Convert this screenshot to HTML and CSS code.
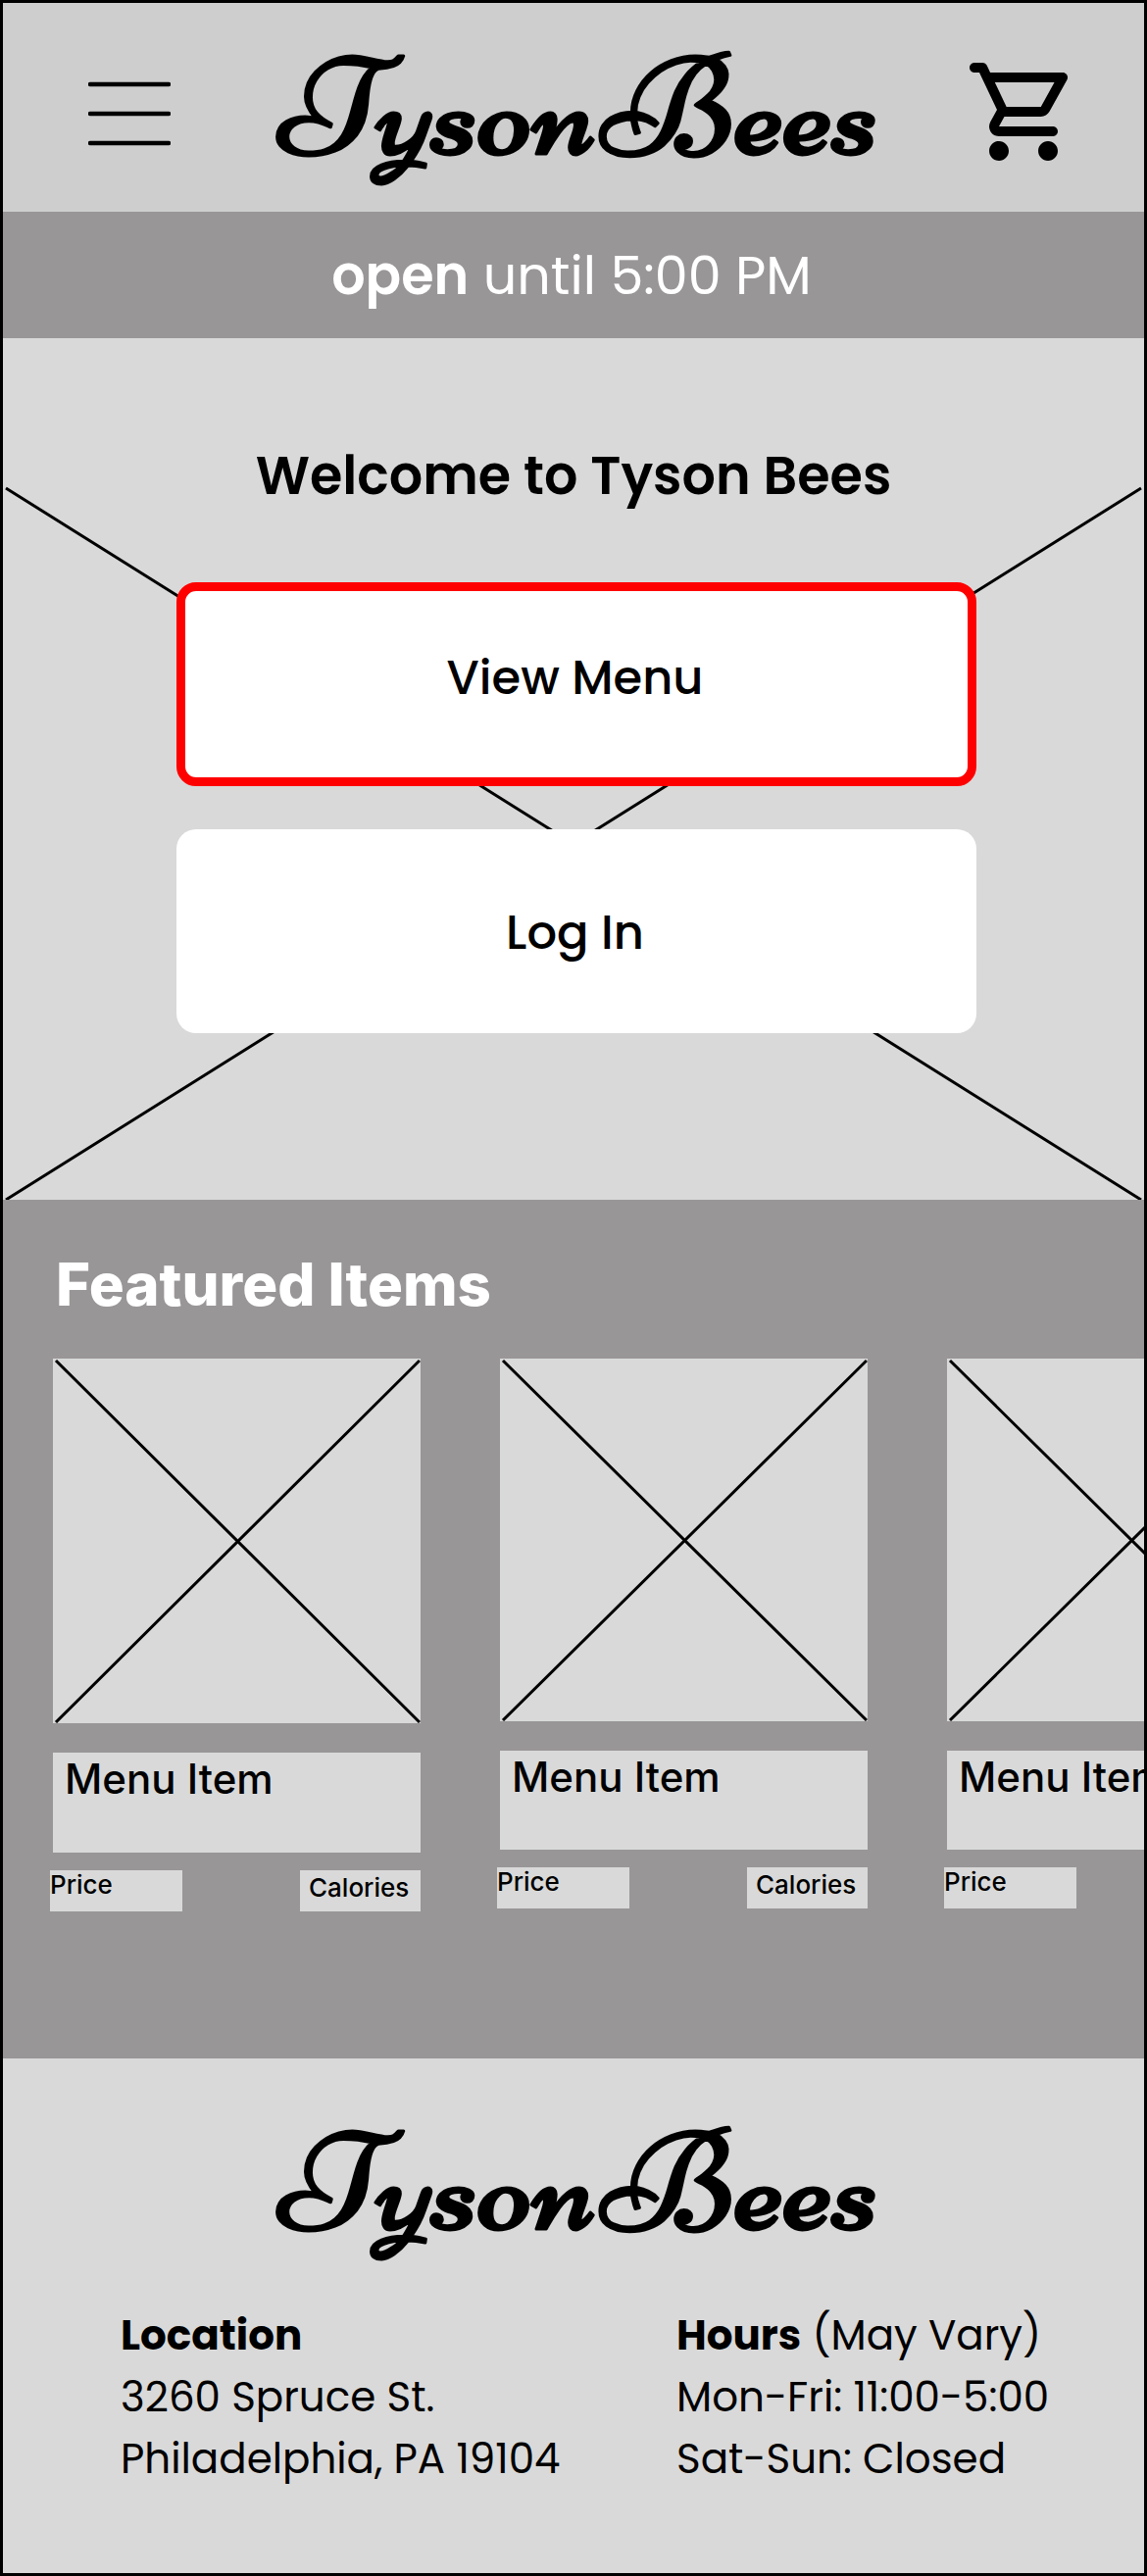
FILE: index.html
```html
<!DOCTYPE html>
<html lang="en">
<head>
<meta charset="utf-8">
<title>Tyson Bees</title>
<link rel="stylesheet" href="styles.css">
</head>
<body>
<div class="page">
  <header class="header">
    <svg class="menu-icon" viewBox="0 0 84 66" role="img" aria-label="Menu"><path d="M2 3H82M2 33H82M2 63H82"/></svg>
    <svg class="logo" viewBox="0 0 612 213"><text class="logo-text" x="3" y="154" textLength="324" lengthAdjust="spacingAndGlyphs">Tyson</text><text class="logo-text" x="332" y="154" textLength="283" lengthAdjust="spacingAndGlyphs">Bees</text></svg>
    <svg class="cart-icon" viewBox="0 0 24 24" role="img" aria-label="Cart"><path d="M15.55 13c.75 0 1.41-.41 1.75-1.03l3.58-6.49c.37-.66-.11-1.48-.87-1.48H5.21l-.67-1.43c-.16-.35-.52-.57-.9-.57H2c-.55 0-1 .45-1 1s.45 1 1 1h1l3.6 7.59-1.35 2.44C4.52 15.37 5.48 17 7 17h11c.55 0 1-.45 1-1s-.45-1-1-1H7l1.1-2h7.45zM6.16 6h12.15l-2.76 5H8.53L6.16 6zM7 18c-1.1 0-1.99.9-1.99 2S5.9 22 7 22s2-.9 2-2-.9-2-2-2zm10 0c-1.1 0-1.99.9-1.99 2s.89 2 1.99 2 2-.9 2-2-.9-2-2-2z"/></svg>
  </header>

  <div class="status"><strong class="status-open">open</strong> until 5:00 PM</div>

  <main>
    <section class="hero">
      <svg class="hero-cross" viewBox="0 0 1164 879"><path d="M3 153L1161 879M1161 153L3 879"/></svg>
      <h1 class="hero-title">Welcome to Tyson Bees</h1>
      <a class="button button-primary">View Menu</a>
      <a class="button button-login">Log In</a>
    </section>

    <section class="featured">
      <h2 class="featured-title">Featured Items</h2>
      <div class="items">
        <article class="item item-first">
          <svg class="photo" viewBox="0 0 375 372" preserveAspectRatio="none"><path d="M3 2L374 371M374 2L3 371"/></svg>
          <h3 class="name">Menu Item</h3>
          <div class="facts"><span class="price">Price</span><span class="calories">Calories</span></div>
        </article>
        <article class="item">
          <svg class="photo" viewBox="0 0 375 372" preserveAspectRatio="none"><path d="M3 2L374 371M374 2L3 371"/></svg>
          <h3 class="name">Menu Item</h3>
          <div class="facts"><span class="price">Price</span><span class="calories">Calories</span></div>
        </article>
        <article class="item">
          <svg class="photo" viewBox="0 0 375 372" preserveAspectRatio="none"><path d="M3 2L374 371M374 2L3 371"/></svg>
          <h3 class="name">Menu Item</h3>
          <div class="facts"><span class="price">Price</span></div>
        </article>
      </div>
    </section>
  </main>

  <footer class="footer">
    <svg class="logo footer-logo" viewBox="0 0 612 213"><text class="logo-text" x="3" y="154" textLength="324" lengthAdjust="spacingAndGlyphs">Tyson</text><text class="logo-text" x="332" y="154" textLength="283" lengthAdjust="spacingAndGlyphs">Bees</text></svg>
    <div class="info">
      <div class="location">
        <strong>Location</strong>
        <span>3260 Spruce St.</span>
        <span>Philadelphia, PA 19104</span>
      </div>
      <div class="hours">
        <span><strong>Hours</strong> (May Vary)</span>
        <span>Mon-Fri: 11:00-5:00</span>
        <span>Sat-Sun: Closed</span>
      </div>
    </div>
  </footer>
</div>
</body>
</html>
```
FILE: styles.css
```css
* { box-sizing: border-box; }
body { margin: 0; color: #000; font-family: Poppins, Inter, sans-serif; }
h1, h2, h3 { margin: 0; }
svg { display: block; flex: none; }
.page { width: 1170px; height: 2628px; border: 3px solid #000; background: #d9d9d9; overflow: hidden; }

.header { display: flex; height: 213px; padding-left: 87px; background: #cecece; }
.menu-icon { width: 84px; height: 66px; margin-top: 80px; }
.menu-icon path { stroke: #000; stroke-width: 4.5; stroke-linecap: round; }
.logo { width: 612px; height: 213px; margin-left: 108px; overflow: visible; }
.logo-text { font: 142px Niconne, Lato, cursive; stroke: #000; stroke-width: 3px; stroke-linejoin: round; }
.cart-icon { width: 120px; height: 120px; margin: 51px 0 0 90px; }

.status { height: 129px; padding: 1px 4px 0 0; background: #999697; color: #fff; font-size: 54px; line-height: 128px; text-align: center; }
.status-open { font-weight: 600; }

.hero { position: relative; height: 879px; padding-top: 110px; }
.hero-cross { position: absolute; inset: 0; width: 1164px; height: 879px; }
.hero-cross path, .photo path { stroke: #000; stroke-width: 3; }
.hero-title { position: relative; font-size: 54px; font-weight: 600; line-height: 60px; text-align: center; }
.button { position: relative; display: flex; align-items: center; justify-content: center; width: 816px; height: 208px; margin: 44px 0 0 177px; padding: 4px 3px 0 0; border-radius: 20px; background: #fff; font-size: 48px; font-weight: 500; }
.button-primary { margin-top: 79px; padding: 0 3px 12px 0; border: 9px solid #f00; }

.featured { height: 876px; padding: 56px 0 0 48px; background: #999697; font-family: Inter, sans-serif; overflow: hidden; }
.featured-title { margin: 0 0 46px 6px; color: #fff; font-size: 60px; font-weight: 800; line-height: 60px; }
.items { display: flex; gap: 78px; }
.item { flex: none; width: 378px; }
.photo { width: 375px; height: 370px; margin-left: 3px; background: #d9d9d9; }
.item-first .photo { height: 372px; }
.name { height: 101px; margin: 30px 0 18px 3px; padding-left: 12px; background: #d9d9d9; font-size: 42px; font-weight: 500; line-height: 54px; }
.item-first .name { height: 102px; }
.facts { display: flex; justify-content: space-between; height: 42px; font-size: 26px; font-weight: 500; }
.price, .calories { background: #d9d9d9; }
.price { width: 135px; line-height: 29px; }
.calories { width: 123px; padding-left: 9px; line-height: 36px; }

.footer { padding-top: 20px; }
.footer-logo { margin-left: 279px; }
.info { display: flex; margin-top: 18px; padding-left: 120px; font-size: 42px; line-height: 63px; white-space: nowrap; }
.location { display: flex; flex-direction: column; align-items: flex-start; width: 567px; }
.hours { display: flex; flex-direction: column; align-items: flex-start; }
```
